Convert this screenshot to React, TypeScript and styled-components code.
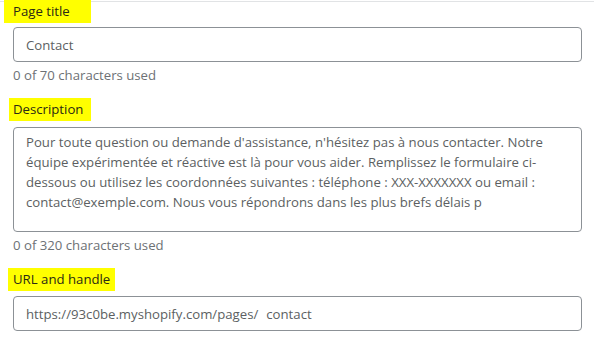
import React from "react";
import styled, { createGlobalStyle } from "styled-components";

const GlobalStyle = createGlobalStyle`
  html, body {
    margin: 0;
    padding: 0;
    background: #ffffff;
  }
  body {
    font-family: "Open Sans", "Noto Sans", sans-serif;
    color: #202223;
  }
`;

const Page = styled.div`
  width: 594px;
  border-top: 1px solid #e1e3e5;
  margin-top: 1px;
  padding: 0 12px 0 13px;
  box-sizing: border-box;
`;

const Field = styled.div`
  display: flex;
  flex-direction: column;
  align-items: flex-start;
  margin-bottom: 13px;

  &:first-child > label {
    margin-top: -2px;
  }
`;

const Label = styled.label<{ $padLeft: number; $padRight: number; $gap: number }>`
  display: inline-block;
  background: #ffff00;
  color: #2b2a14;
  font-size: 13.2px;
  line-height: 23px;
  padding: 0 ${({ $padRight }) => $padRight}px 0 ${({ $padLeft }) => $padLeft}px;
  margin-left: -${({ $padLeft }) => $padLeft}px;
  margin-bottom: ${({ $gap }) => $gap}px;
`;

const Box = styled.div`
  width: 100%;
  box-sizing: border-box;
  border: 1px solid #8c9196;
  border-radius: 4px;
  color: #5c5f62;
  font-size: 13.2px;
  line-height: 20px;
`;

const Input = styled(Box)`
  height: 35px;
  padding: 6.5px 12px;
`;

const TextArea = styled(Box)`
  height: 105px;
  padding: 4px 12px;
`;

const Help = styled.div`
  margin-top: 3px;
  font-size: 13.2px;
  line-height: 20px;
  color: #6d7175;
`;

const Prefix = styled.span`
  margin-right: 8px;
`;

export default function App() {
  return (
    <>
      <GlobalStyle />
      <Page>
        <Field>
          <Label $padLeft={9} $padRight={21} $gap={4}>
            Page title
          </Label>
          <Input>Contact</Input>
          <Help>0 of 70 characters used</Help>
        </Field>
        <Field>
          <Label $padLeft={4} $padRight={8} $gap={6}>
            Description
          </Label>
          <TextArea>
            Pour toute question ou demande d'assistance, n'hésitez pas à nous
            contacter. Notre équipe expérimentée et réactive est là pour vous
            aider. Remplissez le formulaire ci-dessous ou utilisez les
            coordonnées suivantes : téléphone : XXX-XXXXXXX ou email :
            contact@exemple.com. Nous vous répondrons dans les plus brefs délais
            p
          </TextArea>
          <Help>0 of 320 characters used</Help>
        </Field>
        <Field>
          <Label $padLeft={5} $padRight={5} $gap={5}>
            URL and handle
          </Label>
          <Input>
            <Prefix>https://93c0be.myshopify.com/pages/</Prefix>contact
          </Input>
        </Field>
      </Page>
    </>
  );
}
